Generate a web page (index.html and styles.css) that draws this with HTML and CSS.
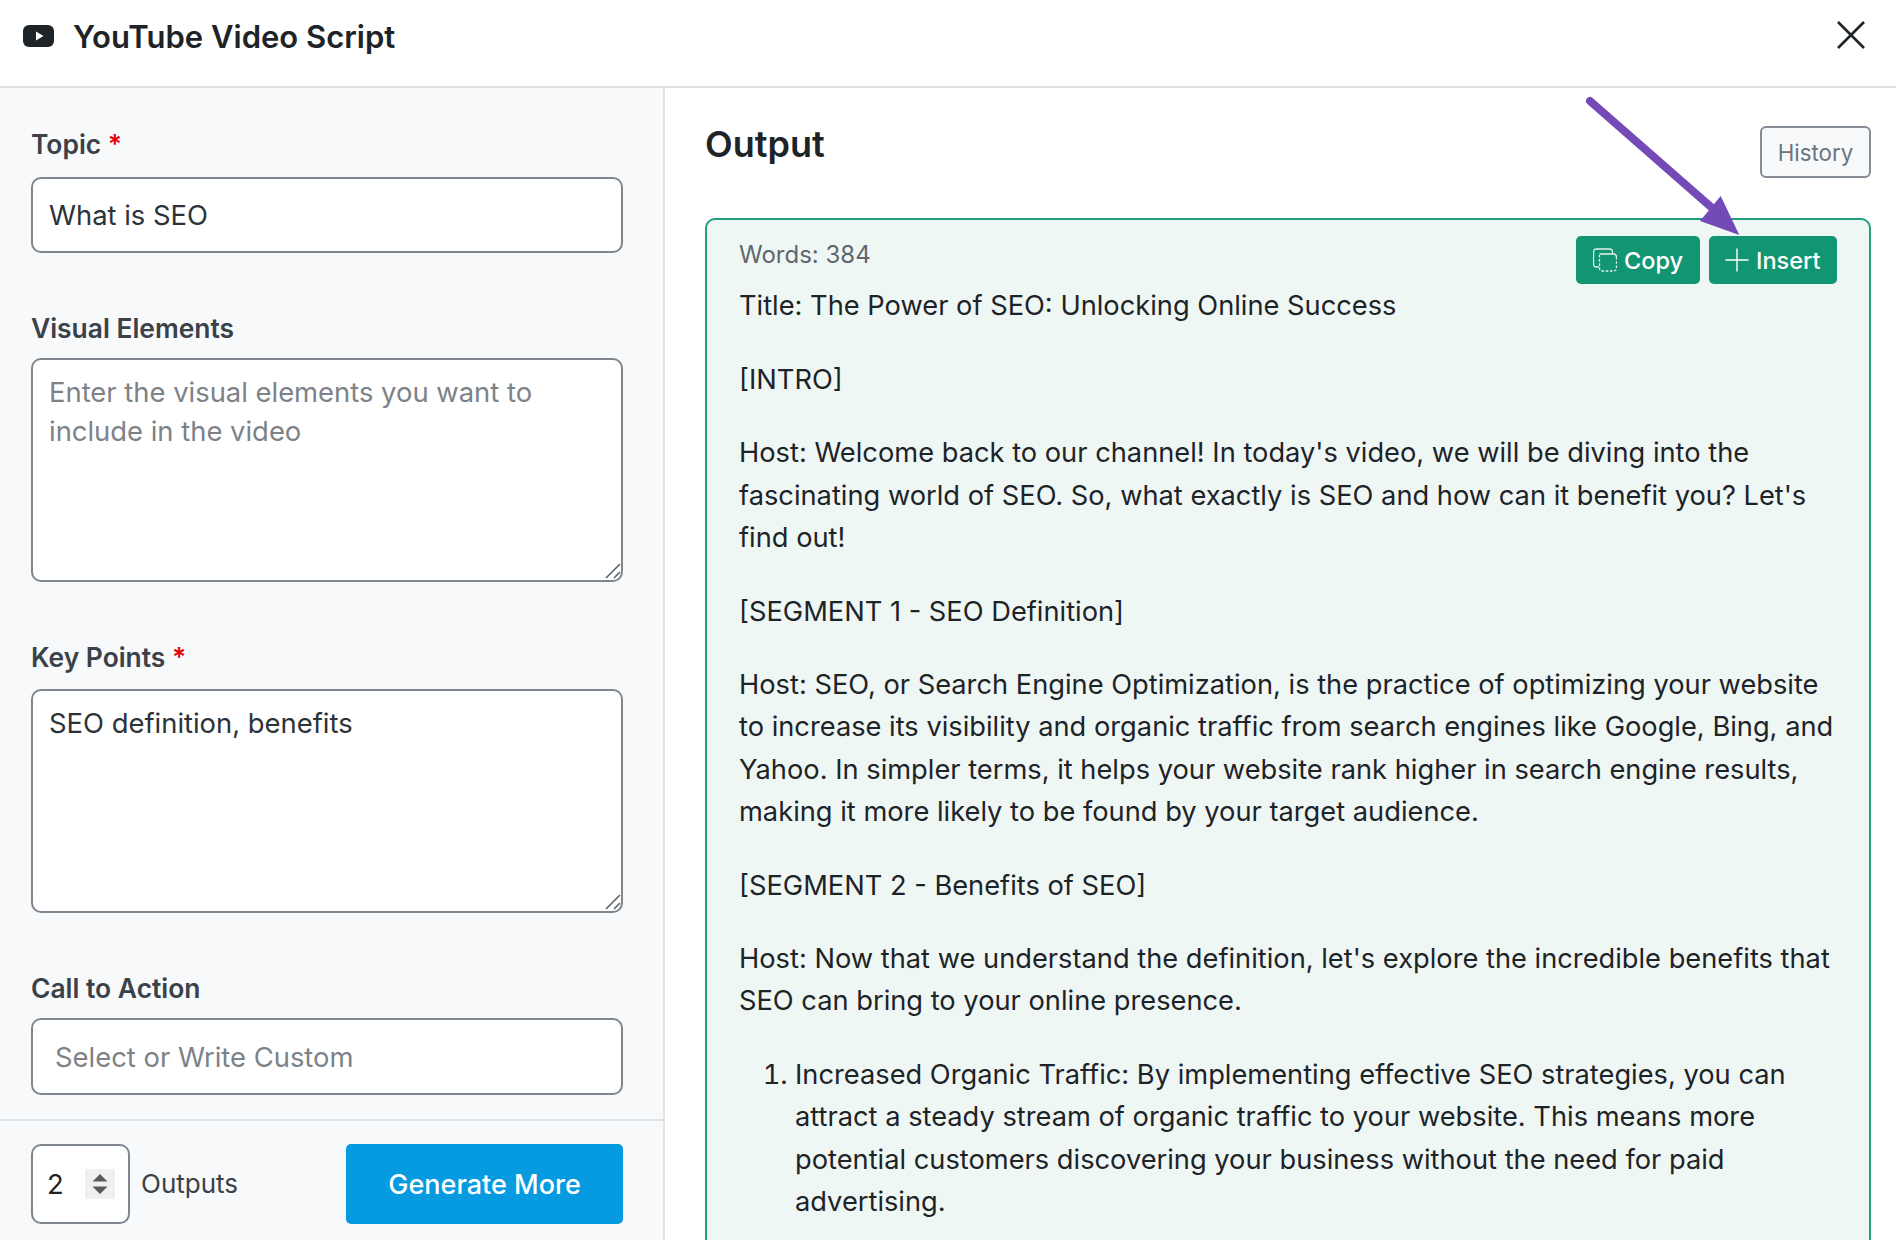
FILE: index.html
```html
<!DOCTYPE html>
<html lang="en">
<head>
  <meta charset="UTF-8" />
  <title>YouTube Video Script</title>
  <link rel="stylesheet" href="styles.css">
</head>
<body>
  <header class="topbar">
    <svg class="yt-icon" viewBox="0 0 31 22" width="31" height="22">
      <rect width="31" height="22" rx="6" fill="#1f2429" />
      <path d="M13 6.5 L20.5 11 L13 15.5 Z" fill="#fff" />
    </svg>
    <h1>YouTube Video Script</h1>
    <svg class="close-icon" viewBox="0 0 28 28" width="28" height="28">
      <path d="M1 1 L27 27 M27 1 L1 27" stroke="#1d2327" stroke-width="2.6" fill="none" />
    </svg>
  </header>

  <div class="layout">
    <aside class="sidebar">
      <form class="fields">
        <label class="label label-first" for="topic">Topic <span class="req">*</span></label>
        <input class="control topic" type="text" id="topic" value="What is SEO" />

        <label class="label label-tight" for="visual">Visual Elements</label>
        <div class="area-wrap">
          <textarea class="control area" id="visual" placeholder="Enter the visual elements you want to include in the video"></textarea>
          <svg class="grip" viewBox="0 0 16 16" width="16" height="16">
            <path d="M1 15 L15 1 M9 15 L15 9" stroke="#5f6469" stroke-width="1.6" fill="none" />
          </svg>
        </div>

        <label class="label" for="points">Key Points <span class="req">*</span></label>
        <div class="area-wrap">
          <textarea class="control area" id="points">SEO definition, benefits</textarea>
          <svg class="grip" viewBox="0 0 16 16" width="16" height="16">
            <path d="M1 15 L15 1 M9 15 L15 9" stroke="#5f6469" stroke-width="1.6" fill="none" />
          </svg>
        </div>

        <label class="label label-tight" for="cta">Call to Action</label>
        <input class="control cta" type="text" id="cta" placeholder="Select or Write Custom" />
      </form>

      <div class="side-footer">
        <div class="num-box">
          <span>2</span>
          <svg class="spinner" viewBox="0 0 30 30" width="30" height="30">
            <rect width="30" height="30" fill="#f0f0f0" />
            <path d="M7.5 12.5 L15 5 L22.5 12.5 Z M7.5 17.5 L15 25 L22.5 17.5 Z" fill="#5a5a5a" />
          </svg>
        </div>
        <span class="outputs-label">Outputs</span>
        <button class="generate" type="button">Generate More</button>
      </div>
    </aside>

    <main class="output">
      <div class="output-head">
        <h2>Output</h2>
        <button class="history" type="button">History</button>
      </div>

      <section class="result">
        <div class="result-bar">
          <span class="words">Words: 384</span>
          <div class="actions">
            <button class="act" type="button">
              <svg viewBox="0 0 24 24" width="24" height="24" fill="none" stroke="#e3f3ee" stroke-width="1.3">
                <path d="M6 19 H3.5 Q0.5 19 0.5 16 V4 Q0.5 1 3.5 1 H16.5 Q19.5 1 19.5 4 V6" />
                <path d="M6.5 6 H20.5 Q23.5 6 23.5 9" />
                <path d="M23.5 9 V20 Q23.5 23 20.5 23 H9.5 Q6.5 23 6.5 20 V6" stroke-dasharray="2.6 1.6" />
              </svg>
              Copy
            </button>
            <button class="act" type="button">
              <svg viewBox="0 0 24 24" width="24" height="24" fill="none" stroke="#fff" stroke-width="1.4">
                <path d="M12 0.5 V23.5 M0.5 12 H23.5" />
              </svg>
              Insert
            </button>
          </div>
        </div>

        <div class="script">
          <p>Title: The Power of SEO: Unlocking Online Success</p>
          <p>[INTRO]</p>
          <p>Host: Welcome back to our channel! In today's video, we will be diving into the fascinating world of SEO. So, what exactly is SEO and how can it benefit you? Let's find out!</p>
          <p>[SEGMENT 1 - SEO Definition]</p>
          <p>Host: SEO, or Search Engine Optimization, is the practice of optimizing your website to increase its visibility and organic traffic from search engines like Google, Bing, and Yahoo. In simpler terms, it helps your website rank higher in search engine results, making it more likely to be found by your target audience.</p>
          <p>[SEGMENT 2 - Benefits of SEO]</p>
          <p>Host: Now that we understand the definition, let's explore the incredible benefits that SEO can bring to your online presence.</p>
          <ol>
            <li>Increased Organic Traffic: By implementing effective SEO strategies, you can attract a steady stream of organic traffic to your website. This means more potential customers discovering your business without the need for paid advertising.</li>
          </ol>
        </div>
      </section>

      <svg class="arrow" viewBox="0 0 170 150" width="170" height="150">
        <path d="M9 8 L130 114" stroke="#734ab6" stroke-width="8" stroke-linecap="round" fill="none" />
        <path d="M139.7 103 L158.3 142 L119 128 Z" fill="#734ab6" />
      </svg>
    </main>
  </div>
</body>
</html>
```

FILE: styles.css
```css
* {
  box-sizing: border-box;
  margin: 0;
  padding: 0;
}

html, body {
  height: 1240px;
  overflow: hidden;
}

body {
  display: flex;
  flex-direction: column;
  background: #fff;
  color: #1d2327;
  font-family: Inter, "Liberation Sans", sans-serif;
}

.topbar {
  display: flex;
  align-items: center;
  flex: none;
  height: 88px;
  padding: 0 31px 16px 23px;
  border-bottom: 2px solid #dfe3e6;
}

.yt-icon {
  margin-top: 2px;
}

.topbar h1 {
  flex: 1;
  margin-left: 19px;
  padding-top: 2px;
  font-size: 31px;
  font-weight: 600;
}

.layout {
  display: flex;
  flex: 1;
  min-height: 0;
}

/* left form */
.sidebar {
  display: flex;
  flex-direction: column;
  flex: none;
  width: 665px;
  background: #f7f9fa;
  border-right: 2px solid #dfe3e6;
}

.fields {
  display: flex;
  flex-direction: column;
  flex: 1;
  padding: 0 40px 0 31px;
}

.label {
  margin: 58px 0 15px;
  font-size: 26.4px;
  line-height: 34px;
  font-weight: 600;
  color: #3a4149;
}

.label-first {
  margin-top: 39px;
  margin-bottom: 16px;
}

.label-tight {
  margin-bottom: 13px;
}

.req {
  color: #e8000b;
}

.control {
  display: block;
  width: 100%;
  height: 75px;
  padding: 0 16px;
  border: 2px solid #7f868d;
  border-radius: 10px;
  background: #fff;
  color: #2c3338;
  font-family: inherit;
  font-size: 27.4px;
  outline: none;
}

.control::placeholder {
  color: #7c8288;
  opacity: 1;
}

.topic {
  height: 76px;
}

.area-wrap {
  position: relative;
}

.area {
  height: 224px;
  padding: 13px 16px;
  line-height: 39px;
  resize: none;
}

.grip {
  position: absolute;
  right: 2px;
  bottom: 3px;
}

.cta {
  height: 77px;
  padding-left: 22px;
}

.side-footer {
  display: flex;
  align-items: flex-start;
  flex: none;
  height: 121px;
  padding: 23px 40px 0 31px;
  border-top: 2px solid #dfe3e6;
}

.num-box {
  display: flex;
  align-items: center;
  justify-content: space-between;
  width: 99px;
  height: 80px;
  padding: 0 13px 0 14px;
  border: 2px solid #7f868d;
  border-radius: 10px;
  background: #fff;
  font-size: 27.4px;
}

.outputs-label {
  flex: 1;
  margin-left: 11px;
  font-size: 26px;
  line-height: 80px;
  color: #3a4149;
}

.generate {
  width: 277px;
  height: 80px;
  border: none;
  border-radius: 5px;
  background: #069ae1;
  color: #fff;
  font-family: inherit;
  font-size: 27px;
  font-weight: 500;
}

/* right side */
.output {
  position: relative;
  flex: 1;
  min-width: 0;
  padding: 0 25px 0 40px;
  overflow: hidden;
}

.output-head {
  display: flex;
  align-items: flex-start;
  justify-content: space-between;
  height: 130px;
  padding-top: 38px;
}

.output-head h2 {
  font-size: 36px;
  line-height: 36px;
  font-weight: 600;
}

.history {
  width: 111px;
  height: 52px;
  border: 2px solid #858c93;
  border-radius: 6px;
  background: #f7f9fb;
  color: #6c757d;
  font-family: inherit;
  font-size: 22.3px;
}

.result {
  height: 1100px;
  padding: 16px 32px 0 32px;
  border: 2px solid #1f9f80;
  border-radius: 10px;
  background: #eff7f5;
}

.result-bar {
  display: flex;
  justify-content: space-between;
  height: 49px;
}

.words {
  padding-top: 2px;
  font-size: 24px;
  line-height: 34px;
  color: #5f666d;
}

.actions {
  display: flex;
  gap: 9px;
}

.act {
  display: flex;
  align-items: center;
  gap: 7px;
  height: 48px;
  padding: 0 16.5px;
  border: none;
  border-radius: 5px;
  background: #129672;
  color: #fff;
  font-family: inherit;
  font-size: 23.5px;
  font-weight: 500;
}

.script {
  font-size: 27.25px;
  line-height: 42.2px;
  color: #1d2327;
}

.script p,
.script ol {
  margin-bottom: 31.5px;
}

.script ol {
  padding-left: 56px;
}

.arrow {
  position: absolute;
  top: 5px;
  left: 916px;
}
```
